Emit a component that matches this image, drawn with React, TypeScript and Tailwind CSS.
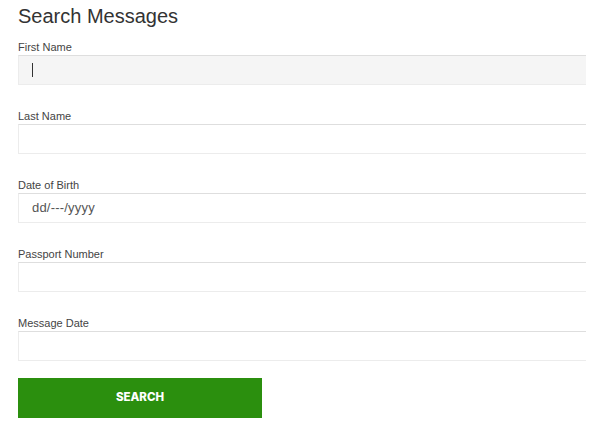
const fields = [
  { label: "First Name", focused: true },
  { label: "Last Name" },
  { label: "Date of Birth", value: "dd/---/yyyy" },
  { label: "Passport Number" },
  { label: "Message Date" },
];

function Field({
  label,
  focused,
  value,
}: {
  label: string;
  focused?: boolean;
  value?: string;
}) {
  return (
    <div className="mb-[25px]">
      <div className="text-[11px] leading-[13px] mb-px text-[#444]">{label}</div>
      <div
        className={`relative h-[30px] w-[568px] border border-r-0 border-[#ececec] border-t-[#dedede] flex items-center pl-[13px] ${
          focused ? "bg-[#f5f5f5]" : "bg-white"
        }`}
      >
        {focused && <span className="block w-px h-[14px] bg-[#333]" />}
        {value && (
          <span className="text-[13px] text-[#555] tracking-[0.2px]">{value}</span>
        )}
      </div>
    </div>
  );
}

export default function App() {
  return (
    <div
      className="w-[599px] h-[431px] bg-white px-[18px] pt-[4px]"
      style={{ fontFamily: "Arial, 'Liberation Sans', sans-serif" }}
    >
      <h1 className="text-[20px] leading-6 text-[#333] mb-[13px]">Search Messages</h1>
      {fields.map((f) => (
        <Field key={f.label} label={f.label} focused={f.focused} value={f.value} />
      ))}
      <button className="block -mt-[8px] h-10 w-[244px] bg-[#2b8f0e] text-white text-[11.5px] font-extrabold font-['Inter',sans-serif]">
        SEARCH
      </button>
    </div>
  );
}
